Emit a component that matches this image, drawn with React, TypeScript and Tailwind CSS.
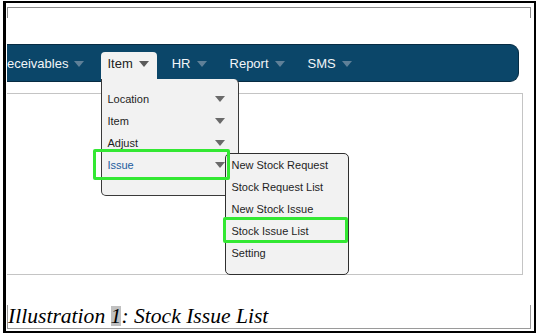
const navItems = ["HR", "Report", "SMS"];

const itemMenu = ["Location", "Item", "Adjust", "Issue"];

const issueMenu = ["New Stock Request", "Stock Request List", "New Stock Issue", "Stock Issue List", "Setting"];

const Arrow = ({ color }: { color: string }) => (
	<svg width="10" height="6" viewBox="0 0 10 6" className="shrink-0">
		<path d="M0 0h10L5 6z" fill={color} />
	</svg>
);

const App = () => {
	return (
		<div className="h-[336px] w-[538px] overflow-hidden bg-white pl-[3px] pt-px">
			<div className="h-[332px] w-[533px] border-2 border-l-[3px] border-black">
				{/* top frame marker */}
				<div className="ml-px mt-[4px] h-[11px] w-[524px] border-x border-t border-[#8c8c8c]" />

				{/* nav bar */}
				<nav className="relative z-10 mt-[26px] ml-px flex h-[38px] w-[512px] gap-[9px] rounded-r-[9px] border-y border-r border-[#072c43] bg-[#0b4669] pt-[7px] font-['Liberation_Sans',Arial,sans-serif] text-[13px] text-[#f2f5f8]">
					<div className="flex items-center gap-[6px] pb-[5px] pr-[8px]">
						<span>eceivables</span>
						<Arrow color="#5f8098" />
					</div>

					<div className="relative flex items-center gap-[6px] rounded-t-[4px] bg-[#f2f2f2] pb-[5px] pl-[6px] pr-[8px] text-[#222]">
						<span>Item</span>
						<Arrow color="#5a5a5a" />

						{/* Item dropdown */}
						<div className="absolute left-0 top-[27px] w-[138px] rounded-b-[5px] rounded-tr-[5px] border-x border-b border-[#3a3a3a] bg-[#f2f2f2] pb-[19px] pt-[9px] text-[11px]">
							{itemMenu.map((label) => (
								<div
									key={label}
									className={`flex h-[22px] items-center justify-between pl-[5px] pr-[13px] ${
										label === "Issue" ? "text-[#1d5c9e]" : "text-[#1e1e1e]"
									}`}
								>
									<span>{label}</span>
									<Arrow color="#6a6a6a" />
								</div>
							))}

							{/* Issue submenu */}
							<div className="absolute left-[123px] top-[74px] h-[122px] w-[124px] rounded-[5px] border border-[#2f2f2f] bg-[#f2f2f2] text-[11px] text-[#1e1e1e]">
								{issueMenu.map((label) => (
									<div key={label} className="flex h-[22px] items-center pl-[5px]">
										{label}
									</div>
								))}
								<div className="absolute left-[-3px] top-[63px] h-[26px] w-[125px] rounded-[2px] border-[3px] border-[#33e833]" />
							</div>

							<div className="absolute left-[-9px] top-[70px] h-[31px] w-[137px] rounded-[2px] border-[3px] border-[#33e833]" />
						</div>
					</div>

					{navItems.map((label) => (
						<div key={label} className="flex items-center gap-[6px] pb-[5px] pl-[6px] pr-[8px]">
							<span>{label}</span>
							<Arrow color="#5f8098" />
						</div>
					))}
				</nav>

				{/* content panel */}
				<div className="mt-[11px] ml-px h-[182px] w-[516px] border-y border-r border-[#c4c4c4]" />

				{/* caption */}
				<div className="mt-[30px] ml-px h-[24px] w-[524px] border-x border-b border-[#9a9a9a]">
					<p className="font-['Liberation_Serif','Times_New_Roman',serif] text-[21.6px] italic leading-[22px] text-black">
						Illustration <span className="inline-block bg-[#c0c0c0] leading-[20px]">1</span>: Stock Issue List
					</p>
				</div>
			</div>
		</div>
	);
};

export default App;
